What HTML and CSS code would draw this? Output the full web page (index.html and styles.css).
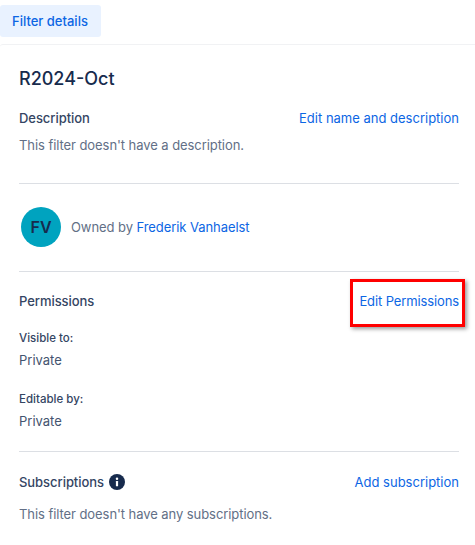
FILE: index.html
```html
<!DOCTYPE html>
<html lang="en">
<head>
<meta charset="utf-8">
<title>Filter details</title>
<link rel="stylesheet" href="styles.css">
</head>
<body>
<div class="tabs"><div class="tab">Filter details</div></div>
<main class="panel">
  <h1 class="title">R2024-Oct</h1>
  <section class="section section-desc">
    <div class="head"><h2 class="label">Description</h2><a class="link">Edit name and description</a></div>
    <p class="muted">This filter doesn't have a description.</p>
  </section>
  <section class="section owner">
    <div class="avatar">FV</div>
    <div class="muted">Owned by <a class="link">Frederik Vanhaelst</a></div>
  </section>
  <section class="section section-perm">
    <div class="head"><h2 class="label">Permissions</h2><a class="link link-tight">Edit Permissions</a></div>
    <div class="field"><div class="small">Visible to:</div><div class="value">Private</div></div>
    <div class="field"><div class="small">Editable by:</div><div class="value">Private</div></div>
    <div class="callout"></div>
  </section>
  <section class="section section-subs">
    <div class="head">
      <h2 class="label label-icon">Subscriptions
        <svg class="info" viewBox="0 0 16 16" aria-hidden="true"><circle cx="8" cy="8" r="8" fill="#172b4d"/><rect x="6.9" y="7" width="2.2" height="5.2" rx=".5" fill="#fff"/><circle cx="8" cy="4.8" r="1.25" fill="#fff"/></svg>
      </h2>
      <a class="link">Add subscription</a>
    </div>
    <p class="muted">This filter doesn't have any subscriptions.</p>
  </section>
</main>
</body>
</html>
```
FILE: styles.css
```css
* { box-sizing: border-box; }
html, body { margin: 0; padding: 0; background: #fff; }
body { font-family: Inter, sans-serif; font-size: 13px; line-height: 20px; color: #172b4d; height: 545px; overflow: hidden; }
.tabs { height: 44px; padding-top: 5px; }
.tab { width: 101px; height: 32px; background: #e9f2ff; color: #0c66e4; border-radius: 3px; font-weight: 500; line-height: 32px; padding-left: 12px; }
.panel { border-top: 1px solid #f1f2f4; border-radius: 3px 0 0 0; padding: 0 16px 0 19px; position: relative; }
.title { margin: 21px 0 0; font-size: 18px; line-height: 26px; font-weight: 500; }
.section { border-bottom: 1px solid #dcdfe4; }
.section:last-child { border-bottom: 0; }
.section-desc { margin-top: 16px; height: 76px; }
.head { display: flex; justify-content: space-between; align-items: center; height: 20px; }
.label { margin: 0; font-size: 13px; line-height: 20px; font-weight: 500; color: #344563; letter-spacing: -0.05px; }
.label-icon { display: flex; align-items: center; gap: 5px; }
.info { width: 16px; height: 16px; }
.link { color: #0c66e4; }
.link-tight { letter-spacing: -0.12px; }
.muted { margin: 0; color: #626f86; letter-spacing: -0.07px; }
.section-desc .muted { margin-top: 7px; }
.owner { display: flex; align-items: center; gap: 10px; height: 88px; padding-left: 2px; padding-bottom: 1px; }
.avatar { width: 40px; height: 40px; border-radius: 50%; background: #00a3bf; color: #172b4d; font-size: 16px; font-weight: 600; letter-spacing: 0; display: flex; align-items: center; justify-content: center; }
.section-perm { height: 180px; padding-top: 19px; position: relative; }
.field { margin-top: 19px; }
.field + .field { margin-top: 21px; }
.small { font-size: 11.5px; line-height: 16px; font-weight: 500; color: #344563; }
.value { margin-top: 4px; color: #44546f; }
.callout { position: absolute; left: 331px; top: 7px; width: 115px; height: 48px; border: 3px solid #f00; box-shadow: 2px 2px 4px rgba(0,0,0,.4); }
.section-subs { padding-top: 20px; }
.section-subs .muted { margin-top: 12px; }
```
